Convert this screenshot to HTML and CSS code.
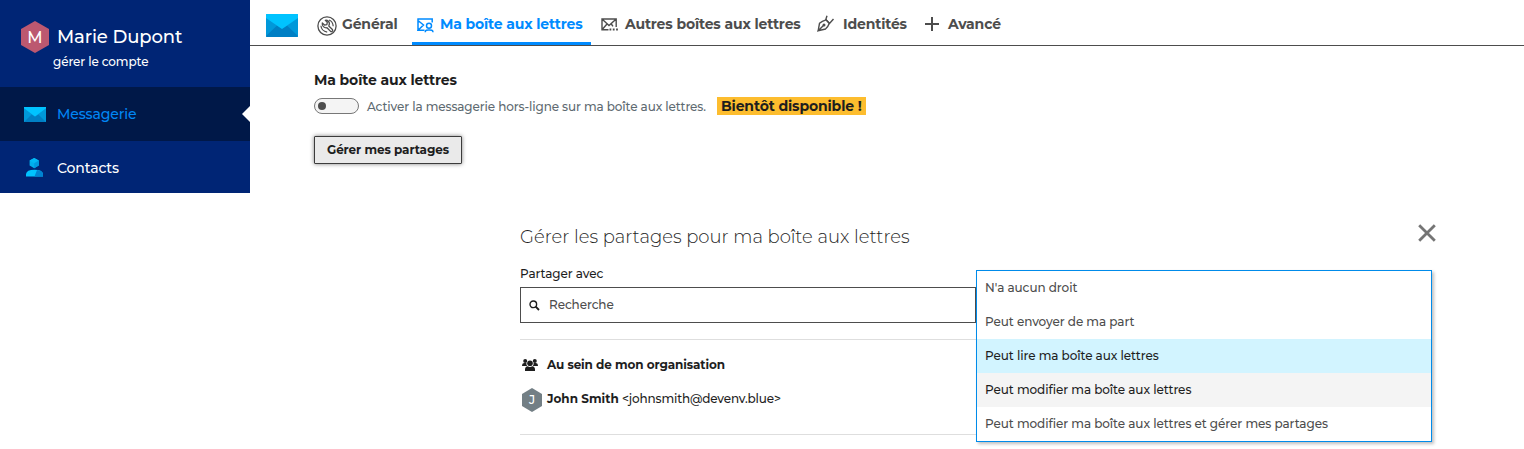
FILE: index.html
```html
<!DOCTYPE html>
<html lang="fr">
<head>
<meta charset="utf-8">
<title>Ma boîte aux lettres</title>
<link rel="stylesheet" href="styles.css">
</head>
<body>
<div class="app">
  <aside class="sidebar">
    <div class="account">
      <div class="account-row">
        <svg class="account-avatar" width="28" height="32" viewBox="0 0 28 32"><path d="M14 0 28 8V24L14 32 0 24V8Z" fill="#bc5870"/><text class="avatar-letter" x="14" y="22" text-anchor="middle" font-size="16">M</text></svg>
        <span class="account-name">Marie Dupont</span>
      </div>
      <a class="account-link">gérer le compte</a>
    </div>
    <a class="nav-item nav-active">
      <svg class="nav-icon" width="22" height="15" viewBox="0 0 32 22" preserveAspectRatio="none"><path d="M0 0H32V22H0Z" fill="#0098da"/><path d="M0 22 11 11 16 14 21 11 32 22Z" fill="#007fc4"/><path d="M0 0H32V2L16 14 0 2Z" fill="#00c3ff"/></svg>
      <span class="t-messagerie">Messagerie</span>
    </a>
    <a class="nav-item nav-contacts">
      <svg class="nav-icon" width="22" height="20" viewBox="0 0 22 20"><path d="M10.200 0 14.800 2.600V7.500L10.200 10.300 5.600 7.500V2.600Z" fill="#00aeec"/><path d="M10.200 0 14.800 2.600 10.200 5.200 5.600 2.600Z" fill="#00b8f5"/><path d="M14.800 2.600V7.500L10.200 10.300V5.200Z" fill="#0098e0"/><path d="M2 18.500V16Q2.500 11.800 10.500 11.700 18.500 11.800 19 16V18.500Z" fill="#00c3ff"/><path d="M13 11.900Q18.500 12.500 19 16V18.500H10.500Z" fill="#0083d2"/></svg>
      <span class="t-contacts">Contacts</span>
    </a>
  </aside>
  <main class="main">
    <nav class="tabs">
      <svg class="mail-logo" width="32" height="23" viewBox="0 0 32 23"><rect width="32" height="23" rx="1" fill="#0098da"/><path d="M0 22 11 11.500 16 14.500 21 11.500 32 22Q32 23 31 23H1Q0 23 0 22Z" fill="#007fc4"/><path d="M1 0H31Q32 0 32 1V4L16 15 0 4V1Q0 0 1 0Z" fill="#00c3ff"/></svg>
      <a class="tab tab-general">
        <svg width="20" height="20" viewBox="0 0 20 20" fill="none" stroke="currentColor"><circle cx="10" cy="10" r="9.100" stroke-width="1.300"/><path stroke-width="1.300" stroke-linejoin="round" d="M8.300 4.300 10.300 6.200 9.900 8.600 7.500 9 5.300 7A4 4 0 0 0 10 11.700L13.600 15.400Q14.500 16 15.300 15.200 16.100 14.400 15.400 13.500L11.800 10Q13.200 6.900 11.400 5.200 10 3.900 8.300 4.300Z"/><path stroke-width="1.200" d="M12 4Q15.900 5.500 16.200 10.200M3.900 9.800Q4.500 15.200 10.200 16.100"/></svg>
        <span class="t-general">Général</span>
      </a>
      <a class="tab tab-active">
        <svg width="18" height="16" viewBox="0 0 18 16" fill="none" stroke="currentColor" stroke-width="1.500"><path d="M1 12.300V2.500L6.500 7 1 12.300H7.500M.3 1H15.200V4.500M1 1V3"/><circle cx="12" cy="7.800" r="2.500"/><path d="M8.200 14.300C8.200 11.800 10.200 12 12 12S16 11.800 16 14.300"/></svg>
        <span class="t-mine">Ma boîte aux lettres</span>
      </a>
      <a class="tab tab-others">
        <svg width="18" height="14" viewBox="0 0 18 14" fill="none" stroke="currentColor" stroke-width="1.400"><path d="M7.500 11.800H1V1H15.200V9M1 1 8 7.500 15.200 1M1 11.800 6 6M10.300 6 12 8.300"/><path d="M8.500 11.500H17" stroke-width="1.800" stroke-dasharray="1.800 1.500"/></svg>
        <span class="t-others">Autres boîtes aux lettres</span>
      </a>
      <a class="tab tab-identity">
        <svg width="18" height="18" viewBox="0 0 18 18" fill="none" stroke="currentColor" stroke-width="1.400"><path d="M1.200 15.700 2.500 8.300Q5 6 9 4.800L12.300 8.200Q11 12 8.500 14L1.200 15.700 6.700 10.300"/><circle cx="7" cy="10" r=".8"/><path d="M10 .8 8.800 4.500 12.500 8.500 16.500 4"/></svg>
        <span class="t-identity">Identités</span>
      </a>
      <a class="tab tab-advanced">
        <svg width="14" height="14" viewBox="0 0 14 14" fill="none" stroke="currentColor" stroke-width="2"><path d="M7 0V14M0 7H14"/></svg>
        <span class="t-advanced">Avancé</span>
      </a>
    </nav>
    <section class="settings">
      <h2 class="settings-title">Ma boîte aux lettres</h2>
      <div class="offline">
        <span class="switch"><span class="knob"></span></span>
        <span class="offline-label">Activer la messagerie hors-ligne sur ma boîte aux lettres.</span>
        <span class="soon">Bientôt disponible !</span>
      </div>
      <button class="share-button">Gérer mes partages</button>
    </section>
    <section class="dialog">
      <header class="dialog-head">
        <h1 class="dialog-title">Gérer les partages pour ma boîte aux lettres</h1>
        <svg class="close" width="18" height="18" viewBox="0 0 18 18" fill="none" stroke="#757575" stroke-width="2.800"><path d="M1.200 1.200 16.800 16.800M16.800 1.200 1.200 16.800"/></svg>
      </header>
      <label class="field-label">Partager avec</label>
      <div class="search">
        <svg width="11" height="11" viewBox="0 0 11 11" fill="none" stroke="#1e1e1e" stroke-width="1.400"><circle cx="4.300" cy="4.300" r="3.300"/><path d="M6.700 6.700 10 10" stroke-width="1.800"/></svg>
        <span class="placeholder">Recherche</span>
      </div>
      <div class="shares">
        <div class="group">
          <svg width="16" height="12" viewBox="0 0 16 12" fill="#1e1e1e"><circle cx="3.200" cy="2" r="2"/><circle cx="12.800" cy="2" r="2"/><path d="M0 6.500Q0 4 2 4H4.400Q4.200 6 5.200 7H.7Q0 7 0 6.500ZM16 6.500Q16 4 14 4H11.600Q11.800 6 10.800 7H15.300Q16 7 16 6.500Z"/><circle cx="8" cy="4.200" r="2.800"/><path d="M3 12V10.500Q3 7.500 5.700 7.200 8 8.700 10.300 7.200 13 7.500 13 10.500V12Z"/></svg>
          <span class="group-name">Au sein de mon organisation</span>
        </div>
        <div class="person">
          <svg width="20" height="24" viewBox="0 0 20 24"><path d="M10 0 20 6V18L10 24 0 18V6Z" fill="#737f85"/><text class="avatar-letter" x="10" y="16" text-anchor="middle" font-size="12">J</text></svg>
          <span class="person-name">John Smith</span>
          <span class="person-mail">&lt;johnsmith@devenv.blue&gt;</span>
        </div>
      </div>
      <ul class="menu">
        <li class="option o1">N'a aucun droit</li>
        <li class="option o2">Peut envoyer de ma part</li>
        <li class="option o3 option-selected">Peut lire ma boîte aux lettres</li>
        <li class="option o4 option-hover">Peut modifier ma boîte aux lettres</li>
        <li class="option o5">Peut modifier ma boîte aux lettres et gérer mes partages</li>
      </ul>
    </section>
  </main>
</div>
</body>
</html>
```
FILE: styles.css
```css
* { box-sizing: border-box; }
body { margin: 0; background: #fff; color: #1e1e1e; font: 500 12px/18px Montserrat, Inter, sans-serif; overflow: hidden; }
h1, h2, ul { margin: 0; padding: 0; list-style: none; }
svg { display: block; flex: none; }
span, h1, h2, label, a, li, button { white-space: nowrap; }
.app { display: flex; align-items: flex-start; height: 449px; }

.sidebar { width: 250px; height: 193px; background: #002575; color: #fff; flex: none; }
.account { height: 87px; padding: 21px 0 0 21px; }
.account-row { display: flex; align-items: center; gap: 8px; height: 32px; }
.avatar-letter { fill: #fff; font-weight: 500; }
.account-name { font-size: 18px; line-height: 24px; letter-spacing: -.1px; }
.account-link { display: block; margin-left: 32px; letter-spacing: -.12px; }
.nav-item { display: flex; align-items: center; height: 54px; padding-left: 24px; gap: 11px; font-size: 14px; letter-spacing: -.12px; }
.nav-active { position: relative; background: #001848; color: #0087f5; }
.nav-active::after { content: ""; position: absolute; right: 0; top: 19px; border: 8px solid transparent; border-left: 0; border-right-color: #fff; }

.main { flex: 1; }
.tabs { display: flex; height: 46px; padding-left: 16px; border-bottom: 1px solid #4d4d4d; color: #4d4d4d; font-size: 14px; font-weight: 700; letter-spacing: -.15px; }
.mail-logo { margin: 14px 15px 0 0; }
.tab { display: flex; align-items: center; height: 45px; padding: 6px 0 0 4px; border-bottom: 3px solid transparent; }
.tab > span { line-height: 20px; }
.tab-general { width: 99px; gap: 5px; }
.tab-general svg { margin-top: 3px; }
.tab-active { width: 179px; gap: 5px; padding-left: 5px; color: #008bff; border-bottom-color: #008bff; }
.tab-active svg { margin-top: 3px; }
.tab-others { padding-left: 10px; width: 222px; gap: 6px; }
.tab-others svg { margin-top: 2px; }
.tab-identity { width: 108px; gap: 8px; }
.tab-advanced { gap: 9px; }

.settings { padding: 24px 0 0 64px; height: 118px; }
.settings-title { font-size: 14px; line-height: 20px; font-weight: 700; letter-spacing: -.13px; }
.offline { display: flex; align-items: center; height: 18px; margin-top: 7px; }
.switch { width: 45px; height: 16px; border: 1px solid #777; border-radius: 8px; background: #f4f4f4; padding: 3px; margin-right: 8px; }
.knob { display: block; width: 8px; height: 8px; border-radius: 50%; background: #4d4d4d; }
.offline-label { width: 350px; padding-top: 2px; color: #5e6a71; letter-spacing: -.1px; }
.soon { width: 149px; height: 18px; padding-left: 4px; background: #fdbd2e; font-size: 14px; font-weight: 700; letter-spacing: -.13px; }
.share-button { display: block; width: 148px; height: 28px; margin-top: 21px; padding: 0 0 0 12px; text-align: left; border: 1px solid #3c3c3c; border-radius: 1px; background: #eaeaea; color: #1e1e1e; font: inherit; font-weight: 700; letter-spacing: -.1px; box-shadow: 0 0 4px rgba(0,0,0,.5); }

.dialog { position: relative; width: 916px; margin: 60px 0 0 270px; }
.dialog-head { display: flex; justify-content: space-between; height: 41px; }
.dialog-title { font-size: 18px; font-weight: 300; line-height: 26px; }
.field-label { display: block; letter-spacing: -.08px; }
.search { display: flex; align-items: center; gap: 9px; width: 456px; height: 36px; margin-top: 4px; padding-left: 8px; border: 1px solid #4d4d4d; color: #4d4d4d; letter-spacing: -.08px; }
.shares { width: 912px; margin-top: 16px; height: 96px; padding: 15px 0 0 2px; border: solid #dedede; border-width: 1px 0; }
.group, .person { display: flex; align-items: center; }
.group { gap: 9px; height: 20px; font-weight: 700; letter-spacing: -.11px; }
.person { height: 24px; margin-top: 13px; }
.person span { margin-bottom: 3px; }
.person-name { width: 75px; margin-left: 5px; font-weight: 700; }
.person-mail { letter-spacing: -.15px; }
.menu { position: absolute; left: 456px; top: 46px; width: 456px; height: 172px; border: 1px solid #008bea; background: #fff; box-shadow: 2px 2px 3px rgba(0,0,0,.25); color: #4d4d4d; letter-spacing: -.06px; }
.option { height: 34px; padding-left: 8px; line-height: 34px; }
.option-selected { background: #d2f4ff; color: #1e1e1e; }
.option-hover { background: #f4f4f4; color: #1e1e1e; }
```
